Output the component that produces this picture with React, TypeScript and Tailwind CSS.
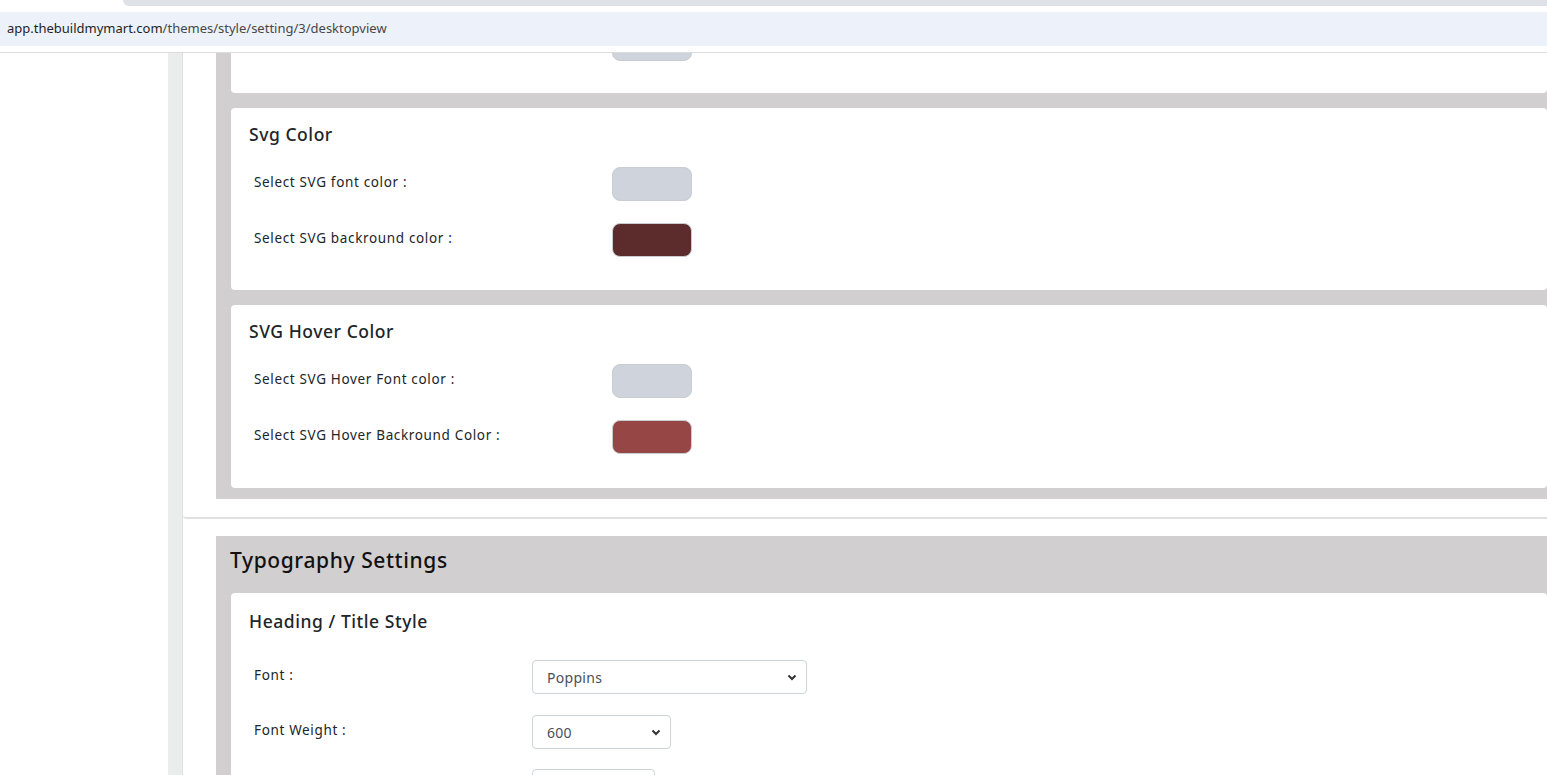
const font = { fontFamily: '"Noto Sans", "Open Sans", sans-serif' };

const Swatch = ({ color }: { color: string }) => (
  <div className="w-[80px] h-[34px] rounded-[8px] border border-[#c9ccd1]" style={{ backgroundColor: color }} />
);

const ColorRow = ({ label, color, first }: { label: string; color: string; first?: boolean }) => (
  <div className={`flex items-center pl-[5px] ${first ? "mt-[21px]" : "mt-[22px]"}`}>
    <span className="w-[358px] text-[13.5px] tracking-[0.65px] text-[#212529] -mt-[4px]">{label}</span>
    <Swatch color={color} />
  </div>
);

const ColorCard = ({ title, rows, tall }: { title: string; rows: { label: string; color: string }[]; tall?: boolean }) => (
  <div className={`bg-white rounded-[4px] pt-[14px] pl-[18px] mt-[15px] ${tall ? "pb-[34px]" : "pb-[33px]"}`}>
    <h3 className="text-[17.5px] tracking-[0.55px] leading-[24px] font-medium text-[#212529]">{title}</h3>
    {rows.map((r, i) => (
      <ColorRow key={r.label} label={r.label} color={r.color} first={i === 0} />
    ))}
  </div>
);

const Select = ({ value, width }: { value?: string; width: string }) => (
  <div className={`relative ${width} h-[34px] border border-[#ced4da] rounded-[4px] bg-white flex items-center pl-[14px]`}>
    {value && <span className="text-[14px] tracking-[0.3px] text-[#495057]">{value}</span>}
    <svg className="absolute right-[9px] top-[13px]" width="10" height="7" viewBox="0 0 10 7">
      <path d="M1.5 1.5 L5 5 L8.5 1.5" fill="none" stroke="#333" strokeWidth="2" />
    </svg>
  </div>
);

export default function App() {
  return (
    <div className="w-[1547px] h-[775px] overflow-hidden bg-white" style={font}>
      {/* browser chrome */}
      <div className="h-[6px] pl-[123px]">
        <div className="h-full bg-[#dee1e6] rounded-bl-[14px]" />
      </div>
      <div className="h-[6px]" />
      <div className="h-[34px] bg-[#edf2fa] flex items-center pl-[7px]">
        <span className="text-[13px] text-[#1f1f1f]">
          app.thebuildmymart.com<span className="text-[#474747]">/themes/style/setting/3/desktopview</span>
        </span>
      </div>
      <div className="h-[6px] border-b border-[#dadce0] box-content" />

      <div className="flex h-[722px]">
        <div className="w-[168px] shrink-0 bg-white" />
        <div className="w-[15px] shrink-0 bg-[#e9eeed] border-r border-[#dde2e1]" />
        <div className="flex-1 min-w-0 overflow-hidden">
          {/* colour settings card */}
          <div className="border-b-2 border-[#e0e0e0] pl-[33px] pb-[18px] rounded-bl-[4px]">
            <div className="bg-[#d1cfd0] pl-[15px] pb-[11px]">
              <div className="bg-white h-[40px] rounded-b-[4px] relative">
                <div className="absolute left-[381px] -top-[26px] w-[80px] h-[34px] rounded-[8px] border border-[#c9ccd1] bg-[#cfd4dc]" />
              </div>
              <ColorCard
                title="Svg Color"
                rows={[
                  { label: "Select SVG font color :", color: "#cfd4dc" },
                  { label: "Select SVG backround color :", color: "#5c2b2b" },
                ]}
              />
              <ColorCard
                title="SVG Hover Color"
                tall
                rows={[
                  { label: "Select SVG Hover Font color :", color: "#cfd4dc" },
                  { label: "Select SVG Hover Backround Color :", color: "#974646" },
                ]}
              />
            </div>
          </div>

          {/* typography card */}
          <div className="pl-[33px] pt-[17px]">
            <div className="bg-[#d1cfd0] pl-[15px]">
              <div className="h-[57px] pb-[8px] flex items-center -ml-[1px]">
                <h2 className="text-[21px] tracking-[0.6px] font-medium text-[#111]">Typography Settings</h2>
              </div>
              <div className="bg-white rounded-t-[4px] pt-[16px] pl-[18px] h-[200px]">
                <h3 className="text-[17.5px] tracking-[0.55px] leading-[24px] font-medium text-[#212529]">Heading / Title Style</h3>
                <div className="flex items-center pl-[5px] mt-[27px]">
                  <span className="w-[278px] text-[13.5px] tracking-[0.65px] text-[#212529] -mt-[3px]">Font :</span>
                  <Select value="Poppins" width="w-[275px]" />
                </div>
                <div className="flex items-center pl-[5px] mt-[21px]">
                  <span className="w-[278px] text-[13.5px] tracking-[0.65px] text-[#212529] -mt-[3px]">Font Weight :</span>
                  <Select value="600" width="w-[139px]" />
                </div>
                <div className="flex items-center pl-[5px] mt-[20px]">
                  <span className="w-[278px]" />
                  <Select width="w-[123px]" />
                </div>
              </div>
            </div>
          </div>
        </div>
      </div>
    </div>
  );
}
